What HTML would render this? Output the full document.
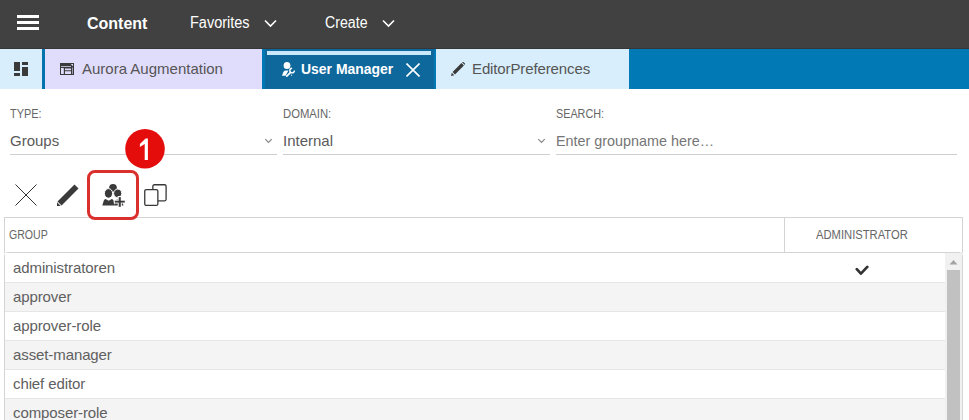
<!DOCTYPE html>
<html><head><meta charset="utf-8">
<style>
*{box-sizing:border-box;margin:0;padding:0}
html,body{width:969px;height:420px;overflow:hidden;background:#fff;font-family:"Liberation Sans",sans-serif;color:#555}
.a{position:absolute;white-space:nowrap}
#top{position:absolute;left:0;top:0;width:969px;height:48px;background:#414141;border-bottom:1px solid #363636;height:49px}
.bar{position:absolute;background:#fff;height:3px;left:17px;width:22px}
.nav{position:absolute;color:#fff;font-size:16px;line-height:18px;transform-origin:0 0}
#tabs{position:absolute;left:0;top:49px;width:969px;height:40px;background:#0079b5}
.tab{position:absolute;top:0;height:40px}
.tt{position:absolute;font-size:15px;line-height:18px;top:10.6px}
.lbl{position:absolute;font-size:12px;line-height:14px;color:#666;transform-origin:0 0;letter-spacing:0}
.val{position:absolute;font-size:15px;line-height:18px;color:#5a5a5a}
.ul{position:absolute;top:154px;height:1px;background:#cfcfcf}
.row{position:absolute;left:5px;width:940px;height:29px;border-top:1px solid #e6e6e6}
.row span{position:absolute;left:8px;top:5px;font-size:15px;line-height:18px;color:#606060;letter-spacing:-0.1px}
</style></head>
<body>
<div id="top">
  <div class="bar" style="top:15px"></div>
  <div class="bar" style="top:21px"></div>
  <div class="bar" style="top:27px"></div>
  <div class="nav" style="left:87px;top:15px;font-weight:700;font-size:16px;letter-spacing:0">Content</div>
  <div class="nav" style="left:190px;top:14px;transform:scaleX(0.905)">Favorites</div>
  <svg class="a" style="left:264px;top:19px" width="13" height="9" viewBox="0 0 13 9"><path d="M1 1.5 L6.5 7 L12 1.5" fill="none" stroke="#fff" stroke-width="1.6"/></svg>
  <div class="nav" style="left:325px;top:14px;transform:scaleX(0.885)">Create</div>
  <svg class="a" style="left:382px;top:19px" width="13" height="9" viewBox="0 0 13 9"><path d="M1 1.5 L6.5 7 L12 1.5" fill="none" stroke="#fff" stroke-width="1.6"/></svg>
</div>

<div id="tabs">
  <div class="tab" style="left:0;width:42px;background:#d8eefc">
    <svg class="a" style="left:14px;top:13px" width="14" height="14" viewBox="0 0 14 14" fill="#3a3a3a"><rect x="0" y="0" width="6" height="9"/><rect x="0" y="11" width="6" height="3"/><rect x="8" y="0" width="6" height="3"/><rect x="8" y="5" width="6" height="9"/></svg>
  </div>
  <div class="tab" style="left:42px;width:3px;background:#0572b0"></div>
  <div class="tab" style="left:45px;width:217px;background:#e0dcfc">
    <svg class="a" style="left:15px;top:14px" width="14" height="12" viewBox="0 0 14 12"><path fill="#3a3a3a" fill-rule="evenodd" d="M0 0H14V12H0Z M1 3.2H11V4H1Z M1 5H3.8V11H1Z M5 5.4H11V7.2H5Z M5 8.3H11V11.1H5Z M10.8 1H13V3.3Z M12 4.5H12.6V11H12Z"/></svg>
    <div class="tt" style="left:37px;color:#555">Aurora Augmentation</div>
  </div>
  <div class="tab" style="left:262px;width:3px;background:#0077b5"></div>
  <div class="tab" style="left:265px;width:169px;background:#0e689c">
    <div class="a" style="left:2px;top:2px;width:164px;height:4px;background:#c9e9fb"></div>
    <svg class="a" style="left:15px;top:11px" width="18" height="18" viewBox="0 0 18 18" fill="#fff"><ellipse cx="7" cy="5.4" rx="3.4" ry="3.5"/><path d="M2 15.7 L3.4 12 Q4 10.7 5.4 10.5 L8.4 10.4 L5.6 15.7 Z"/><path d="M11 15.8 L11.8 13.9 L12.2 15.8 Z"/><path d="M6.8 16.2 L10.6 12.4" stroke="#fff" stroke-width="1.7" stroke-linecap="round" fill="none"/><path d="M14.4 10.6 A2.3 2.3 0 1 1 12.1 8.3" stroke="#fff" stroke-width="1.4" fill="none"/></svg>
    <div class="tt" style="left:36px;color:#fff;font-weight:700;font-size:15.5px;top:10.5px;transform:scaleX(0.9);transform-origin:0 0">User Manager</div>
    <svg class="a" style="left:141px;top:14px" width="14" height="14" viewBox="0 0 14 14"><path d="M0.5 0.5 L13.5 13.5 M13.5 0.5 L0.5 13.5" stroke="#fff" stroke-width="1.6"/></svg>
  </div>
  <div class="tab" style="left:434px;width:2px;background:#0079b5"></div>
  <div class="tab" style="left:436px;width:193px;background:#d8eefc">
    <svg class="a" style="left:15px;top:13px" width="14" height="14" viewBox="0 0 14 14" fill="#3a3a3a"><path d="M0 14 L0.8 10.8 L3.2 13.2 Z"/><path d="M1.6 10 L10.5 1.1 L12.9 3.5 L4 12.4 Z"/><path d="M11.2 0.4 L12 -0.4 L14.4 2 L13.6 2.8 Z"/></svg>
    <div class="tt" style="left:36px;color:#555;letter-spacing:-0.12px">EditorPreferences</div>
  </div>
</div>

<div class="lbl" style="left:10px;top:107px;transform:scaleX(0.91)">TYPE:</div>
<div class="val" style="left:10px;top:131.5px">Groups</div>
<svg class="a" style="left:263.5px;top:138px" width="9" height="6" viewBox="0 0 9 6"><path d="M1.3 1.2 L4.5 4.4 L7.7 1.2" fill="none" stroke="#858585" stroke-width="1.2"/></svg>
<div class="ul" style="left:10px;width:267px"></div>

<div class="lbl" style="left:283px;top:107px;transform:scaleX(0.94)">DOMAIN:</div>
<div class="val" style="left:283px;top:131.5px">Internal</div>
<svg class="a" style="left:536.5px;top:138px" width="9" height="6" viewBox="0 0 9 6"><path d="M1.3 1.2 L4.5 4.4 L7.7 1.2" fill="none" stroke="#858585" stroke-width="1.2"/></svg>
<div class="ul" style="left:283px;width:267px"></div>

<div class="lbl" style="left:556px;top:107px;transform:scaleX(0.9)">SEARCH:</div>
<div class="val" style="left:556px;top:131.5px;color:#757575;transform:scaleX(0.957);transform-origin:0 0">Enter groupname here…</div>
<div class="ul" style="left:556px;width:401px"></div>

<!-- toolbar -->
<svg class="a" style="left:15px;top:184px" width="22" height="22" viewBox="0 0 22 22"><path d="M0.5 0.5 L21.5 21.5 M21.5 0.5 L0.5 21.5" stroke="#333" stroke-width="1"/></svg>
<svg class="a" style="left:57px;top:184px" width="22" height="22" viewBox="0 0 22 22" fill="#3a3a3a"><path d="M0 22 L0 18.3 L3.7 22 Z"/><path d="M0.54 17.43 L17.47 0.5 L21.5 4.53 L4.57 21.47 Z"/></svg>
<div class="a" style="left:87px;top:170px;width:52px;height:50px;border:3.5px solid #d9302e;border-radius:8px;z-index:5"></div>
<svg class="a" style="left:100px;top:182px;z-index:5" width="26" height="26" viewBox="0 0 26 26" fill="#3a3a3a"><circle cx="13" cy="5.9" r="3.9"/><path d="M14.6 23.6 Q14.6 17.6 17.8 17.3 Q23 17.6 23.4 23.6 Z"/><ellipse cx="17.7" cy="11.4" rx="4.1" ry="4.3" stroke="#fff" stroke-width="1"/><ellipse cx="8.5" cy="11.4" rx="4.1" ry="4.8" stroke="#fff" stroke-width="1"/><path d="M2.3 23.4 L3.9 18.2 Q4.4 17 5.6 16.9 L8.7 18.7 L11.8 16.9 Q13 17 13.5 18.2 L14.9 23.4 Z"/><path fill="#fff" d="M13.8 17.7 H17.7 V14.1 H21.8 V17.7 H25.8 V21.5 H21.8 V25.8 H17.7 V21.5 H13.8Z"/><rect x="14.8" y="18.7" width="10" height="1.9"/><rect x="18.7" y="15.1" width="2.1" height="9.7"/></svg>
<svg class="a" style="left:143px;top:183px" width="24" height="24" viewBox="0 0 24 24" fill="none" stroke="#383838" stroke-width="1.3"><rect x="9.85" y="1.75" width="13.25" height="16.1" rx="1.5" fill="#fff"/><rect x="1.75" y="6.55" width="13.1" height="15.9" rx="1.5" fill="#fff"/></svg>

<svg class="a" style="left:125px;top:129px" width="40" height="40" viewBox="0 0 40 40"><circle cx="20" cy="19.8" r="19.8" fill="#e50c0c"/><path fill="#fff" d="M20.6 9.6 L22.9 9.6 L22.9 31 L19.7 31 L19.7 14.9 L14.9 17.9 L14.9 15.1 Z"/></svg>

<!-- table -->
<div class="a" style="left:4px;top:217px;width:959px;height:36px;border:1px solid #d4d4d4;border-bottom:none"></div>
<div class="a" style="left:784px;top:217px;width:1px;height:35px;background:#d4d4d4"></div>
<div class="lbl" style="left:9px;top:228px;transform:scaleX(0.88)">GROUP</div>
<div class="lbl" style="left:816px;top:228px;transform:scaleX(0.935)">ADMINISTRATOR</div>
<div class="a" style="left:4px;top:252px;width:959px;height:200px;border:1px solid #d4d4d4;border-radius:4px 4px 0 0;background:#fff"></div>

<div class="row" style="top:253px;background:#fff;border-top:none"><span style="top:6px">administratoren</span></div>
<div class="row" style="top:282px;background:#f4f4f4"><span>approver</span></div>
<div class="row" style="top:311px;background:#fff"><span>approver-role</span></div>
<div class="row" style="top:340px;background:#f4f4f4"><span>asset-manager</span></div>
<div class="row" style="top:369px;background:#fff"><span>chief editor</span></div>
<div class="row" style="top:398px;background:#f4f4f4"><span>composer-role</span></div>

<svg class="a" style="left:855px;top:265px" width="14" height="10" viewBox="0 0 14 10"><path d="M1.8 4.2 L5.9 8.6 L12.3 1.9" fill="none" stroke="#333" stroke-width="2.7" stroke-linecap="round" stroke-linejoin="round"/></svg>

<div class="a" style="left:945px;top:253px;width:17px;height:167px;background:#f1f1f1;border-top-right-radius:3px"></div>
<svg class="a" style="left:949px;top:259px" width="9" height="6" viewBox="0 0 9 6"><path d="M0.5 5.5 L4.5 1 L8.5 5.5 Z" fill="#a3a3a3"/></svg>
<div class="a" style="left:947px;top:270px;width:13px;height:150px;background:#c1c1c1"></div>
</body></html>
